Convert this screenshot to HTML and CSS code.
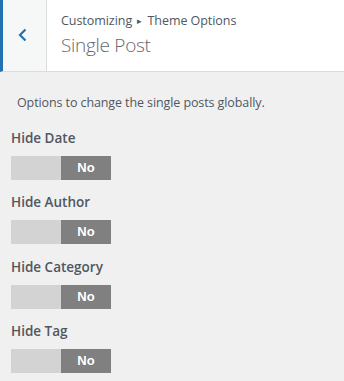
FILE: index.html
```html
<!DOCTYPE html>
<html>
<head>
<meta charset="utf-8">
<link rel="stylesheet" href="styles.css">
</head>
<body>
<div class="panel">
  <header class="head">
    <div class="back">
      <svg width="12" height="14" viewBox="0 0 12 14"><path d="M8.5 1.5 L3 7 L8.5 12.5" fill="none" stroke="#2271b1" stroke-width="2.2"/></svg>
    </div>
    <div class="titles">
      <div class="crumb">Customizing <span class="tri">▸</span> Theme Options</div>
      <div class="title">Single Post</div>
    </div>
  </header>
  <main class="body">
    <p class="desc">Options to change the single posts globally.</p>
    <div class="control">
      <div class="label">Hide Date</div>
      <div class="toggle"><span class="off"></span><span class="on">No</span></div>
    </div>
    <div class="control">
      <div class="label">Hide Author</div>
      <div class="toggle"><span class="off"></span><span class="on">No</span></div>
    </div>
    <div class="control">
      <div class="label">Hide Category</div>
      <div class="toggle"><span class="off"></span><span class="on">No</span></div>
    </div>
    <div class="control">
      <div class="label">Hide Tag</div>
      <div class="toggle"><span class="off"></span><span class="on">No</span></div>
    </div>
  </main>
</div>
</body>
</html>
```
FILE: styles.css
```css
html, body {
  margin: 0;
  padding: 0;
  background: #f0f0f1;
  font-family: "Open Sans", "Noto Sans", sans-serif;
  color: #50575e;
}
.panel {
  width: 344px;
  height: 381px;
  overflow: hidden;
}
.head {
  display: flex;
  height: 71px;
  background: #fff;
  border-bottom: 1px solid #dcdcde;
  border-left: 3px solid #2271b1;
  box-sizing: content-box;
}
.back {
  width: 43px;
  background: #f6f7f7;
  border-right: 1px solid #dcdcde;
  display: flex;
  align-items: center;
  justify-content: center;
}
.back svg {
  margin-left: -3px;
  margin-top: -2px;
}
.titles {
  padding-left: 14px;
  padding-top: 12px;
}
.crumb {
  font-size: 12.5px;
  line-height: 18px;
  color: #50575e;
  letter-spacing: -0.05px;
}
.tri {
  font-size: 9px;
  vertical-align: 1px;
  margin: 0 2px;
}
.title {
  font-size: 19px;
  font-weight: 300;
  line-height: 26px;
  margin-top: 2px;
  color: #646970;
  letter-spacing: -0.3px;
}
.body {
  padding: 0 11px;
}
.desc {
  margin: 0;
  padding: 22px 0 0 6px;
  font-size: 12.5px;
  line-height: 18px;
  letter-spacing: -0.1px;
}
.control {
  margin-top: 16px;
}
.control + .control {
  margin-top: 12.33px;
}
.label {
  font-size: 13.5px;
  font-weight: 600;
  line-height: 20px;
  margin-bottom: 8px;
}
.toggle {
  display: flex;
  width: 100px;
  height: 24px;
}
.off {
  flex: 1;
  background: #d3d3d3;
}
.on {
  flex: 1;
  background: #808080;
  color: #fff;
  font-family: "Liberation Sans", Arial, sans-serif;
  font-weight: 700;
  font-size: 13px;
  line-height: 24px;
  text-align: center;
}
```
